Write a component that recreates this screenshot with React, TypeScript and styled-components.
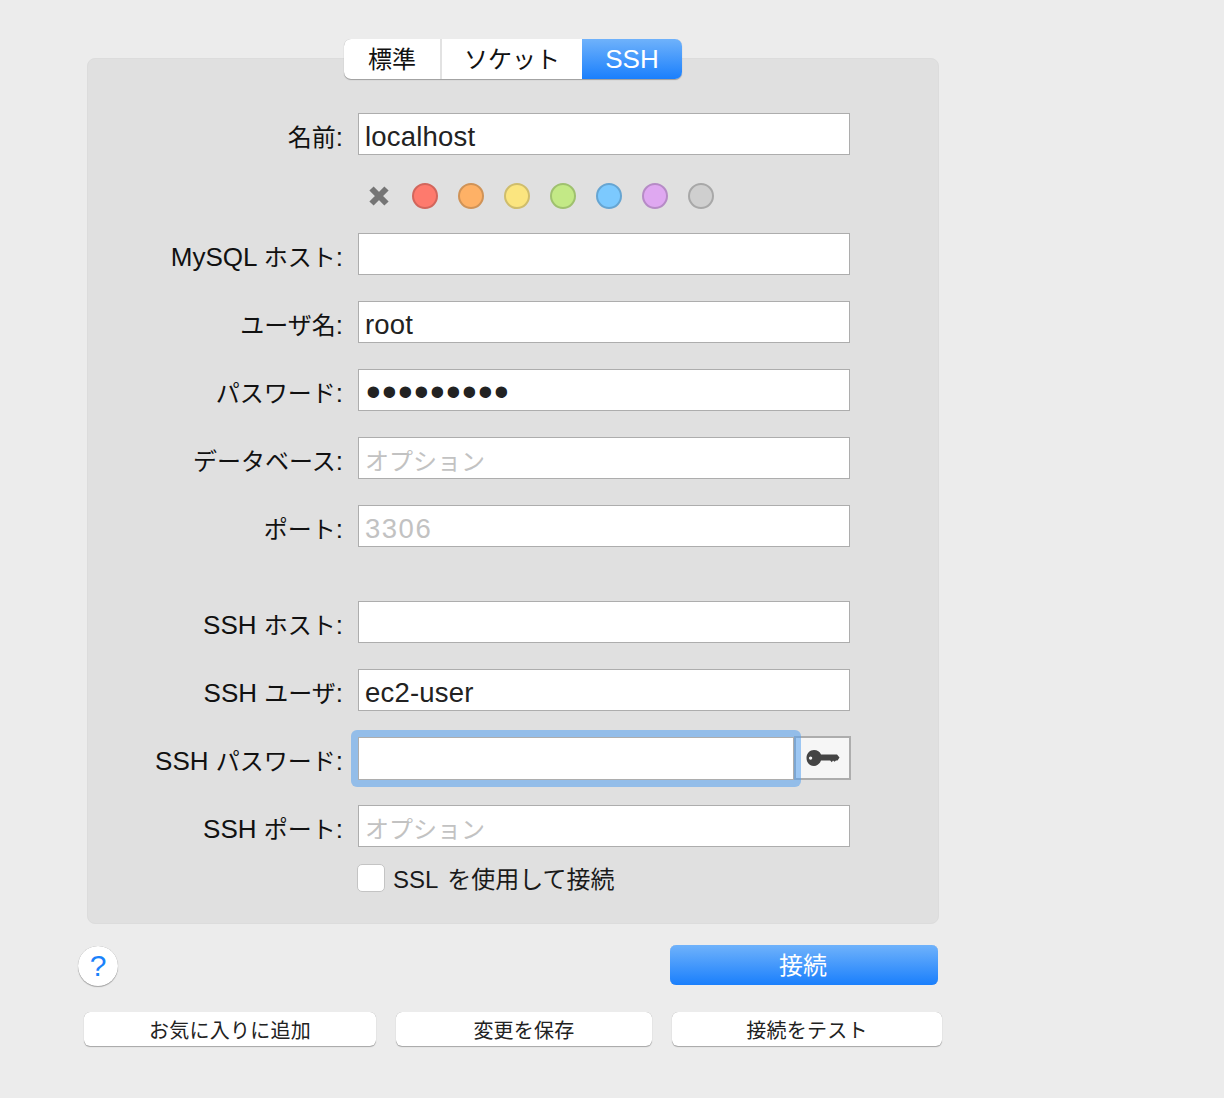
import * as React from 'react'
import styled, {createGlobalStyle} from 'styled-components'

const GlobalStyle = createGlobalStyle`
  html, body {
    margin: 0;
    padding: 0;
    background: #ececec;
  }
  body {
    font-family: "Liberation Sans", "Noto Sans CJK JP", sans-serif;
    font-size: 24px;
    color: #1a1a1a;
  }
`

const Page = styled.div`
  width: 864px;
  height: 1098px;
  box-sizing: border-box;
  margin-left: 78px;
  padding-top: 39px;
`

const Tabs = styled.div`
  position: relative;
  z-index: 1;
  display: flex;
  width: 338px;
  height: 40px;
  margin: 0 0 -21px 266px;
  background: #fff;
  border-radius: 7px;
  box-shadow: 0 1px 1px rgba(0, 0, 0, 0.3), 0 0 0.5px rgba(0, 0, 0, 0.3);
`

const Tab = styled.div<{$width: number; $active?: boolean; $divider?: boolean}>`
  display: flex;
  align-items: center;
  justify-content: center;
  box-sizing: border-box;
  width: ${p => p.$width}px;
  padding-bottom: ${p => (p.$active ? 0 : 4)}px;
  color: ${p => (p.$active ? '#fff' : '#111')};
  background: ${p => (p.$active ? 'linear-gradient(#6fb2fb, #1a7ffc)' : 'transparent')};
  border-radius: ${p => (p.$active ? '0 7px 7px 0' : '0')};
  border-right: ${p => (p.$divider ? '2px solid #e2e2e2' : 'none')};
`

const Panel = styled.div`
  box-sizing: border-box;
  width: 852px;
  height: 866px;
  margin-left: 9px;
  padding-top: 54px;
  background: #e0e0e0;
  border: 1px solid #dcdcdc;
  border-radius: 8px;
`

const Row = styled.div<{$after?: number}>`
  display: grid;
  grid-template-columns: 255px 492px;
  column-gap: 15px;
  height: 42px;
  margin-bottom: ${p => p.$after ?? 26}px;
`

const Label = styled.label`
  padding-top: 7px;
  text-align: right;
  color: #111;
  line-height: 34px;
  white-space: nowrap;
`

const Latin = styled.span`
  font-size: 26px;
`

const Input = styled.input<{$spread?: number; $placeholderSize?: number}>`
  box-sizing: border-box;
  width: 100%;
  height: 42px;
  padding: 6px 6px 0;
  font-family: inherit;
  font-size: 27.5px;
  letter-spacing: 0.2px;
  color: #222;
  background: #fff;
  border: 1.5px solid #adadad;
  border-radius: 0;
  outline: none;

  &::placeholder {
    color: #c2c2c2;
    opacity: 1;
    font-size: ${p => p.$placeholderSize ?? 24}px;
    letter-spacing: ${p => p.$spread ?? 0}px;
  }
`

const PasswordInput = styled(Input)`
  padding: 3px 4px 0 7px;
  font-size: 42px;
  letter-spacing: 1.3px;
`

const FocusGroup = styled.div`
  display: flex;
  width: 493px;
  height: 44px;
  margin-top: -1px;
`

const FocusRing = styled.div`
  position: relative;
  z-index: 1;
  flex: none;
  width: 436px;
  height: 43px;
  margin: -6px -7px 0 -7px;
  padding: 7px;
  background: rgba(84, 160, 240, 0.55);
  border-radius: 6px;
`

const FocusedInput = styled(Input)`
  height: 43px;
`

const KeyButton = styled.div`
  display: flex;
  align-items: center;
  justify-content: center;
  box-sizing: border-box;
  width: 57px;
  padding-left: 1px;
  background: #f6f6f6;
  border: 2px solid #adadad;
`

const ColorRow = styled.div`
  display: flex;
  align-items: center;
  gap: 20px;
  height: 26px;
  margin: 28px 0 24px 280px;
`

const ClearIcon = styled.svg`
  width: 22px;
  height: 22px;
  margin-right: 2px;
`

const Swatch = styled.div<{$fill: string; $edge: string}>`
  box-sizing: border-box;
  width: 26px;
  height: 26px;
  background: ${p => p.$fill};
  border: 2px solid ${p => p.$edge};
  border-radius: 50%;
`

const CheckRow = styled.label`
  display: flex;
  align-items: center;
  gap: 8px;
  height: 28px;
  margin: -9px 0 0 269px;
  color: #1a1a1a;
`

const CheckBox = styled.span`
  box-sizing: border-box;
  width: 28px;
  height: 28px;
  background: #fff;
  border: 1px solid #c4c4c4;
  border-radius: 5px;
`

const CheckText = styled.span`
  position: relative;
  top: -1px;
  word-spacing: 3px;
`

const ActionRow = styled.div`
  display: flex;
  align-items: flex-start;
  justify-content: space-between;
  height: 41px;
  margin: 21px 4px 0 0;
`

const HelpButton = styled.div`
  display: flex;
  align-items: center;
  justify-content: center;
  box-sizing: border-box;
  width: 40px;
  height: 40px;
  margin-top: 1px;
  font-size: 30px;
  color: #1a82fb;
  background: #fff;
  border-radius: 50%;
  box-shadow: 0 1px 1px rgba(0, 0, 0, 0.3), 0 0 0.5px rgba(0, 0, 0, 0.4);
`

const ConnectButton = styled.div`
  display: flex;
  align-items: center;
  justify-content: center;
  width: 268px;
  height: 40px;
  padding: 0 2px 4px 0;
  box-sizing: border-box;
  color: #fff;
  background: linear-gradient(#6fb2fb, #1a7ffc);
  border-radius: 6px;
  box-shadow: 0 0 0.5px rgba(0, 60, 160, 0.6);
`

const ButtonRow = styled.div`
  display: flex;
  gap: 20px;
  margin: 26px 0 0 6px;
`

const PlainButton = styled.div<{$width: number}>`
  display: flex;
  align-items: center;
  justify-content: center;
  box-sizing: border-box;
  width: ${p => p.$width}px;
  height: 34px;
  font-size: 20px;
  letter-spacing: 0.25px;
  color: #222;
  background: #fff;
  border-radius: 6px;
  box-shadow: 0 1px 1px rgba(0, 0, 0, 0.3), 0 0 0.5px rgba(0, 0, 0, 0.35);
`

const swatches = [
  {fill: '#fe7a6d', edge: '#d2665c'},
  {fill: '#feb166', edge: '#d09357'},
  {fill: '#fbe57f', edge: '#cfbd6c'},
  {fill: '#c3e986', edge: '#9fc16f'},
  {fill: '#7cc9fe', edge: '#66a5d2'},
  {fill: '#dfa8f1', edge: '#b68bc6'},
  {fill: '#cfcfcf', edge: '#a8a8a8'},
]

const KeyIcon = () => (
  <svg width="34" height="20" viewBox="0 0 34 20">
    <path
      fill="#444"
      fillRule="evenodd"
      d="M8 2c3.300 0 5.900 1.700 7 4.500h16l2.500 3-2 3h-1.500l-1.500 1.300-1.500-1.300-1.200 1.800-1.600-1.800-1.200 0-1.500 0H15c-1.100 3-3.700 5.500-7 5.500-4.200 0-7.500-3.400-7.500-8S3.800 2 8 2zM4.600 8.400a1.700 1.700 0 1 0 0 3.400 1.700 1.700 0 0 0 0-3.400z"
    />
  </svg>
)

export default function App() {
  return (
    <Page>
      <GlobalStyle />
      <Tabs>
        <Tab $width={98} $divider>標準</Tab>
        <Tab $width={140}>ソケット</Tab>
        <Tab $width={100} $active><Latin>SSH</Latin></Tab>
      </Tabs>
      <Panel>
        <Row $after={0}>
          <Label>名前<Latin>:</Latin></Label>
          <Input readOnly value="localhost" />
        </Row>
        <ColorRow>
          <ClearIcon viewBox="0 0 22 22">
            <path d="M3.500 3.500l15 15M18.500 3.500l-15 15" stroke="#757575" strokeWidth="6" />
          </ClearIcon>
          {swatches.map(s => (
            <Swatch key={s.fill} $fill={s.fill} $edge={s.edge} />
          ))}
        </ColorRow>
        <Row>
          <Label><Latin>MySQL </Latin>ホスト<Latin>:</Latin></Label>
          <Input readOnly />
        </Row>
        <Row>
          <Label>ユーザ名<Latin>:</Latin></Label>
          <Input readOnly value="root" />
        </Row>
        <Row>
          <Label>パスワード<Latin>:</Latin></Label>
          <PasswordInput readOnly type="password" value="123456789" />
        </Row>
        <Row>
          <Label>データベース<Latin>:</Latin></Label>
          <Input readOnly placeholder="オプション" />
        </Row>
        <Row $after={54}>
          <Label>ポート<Latin>:</Latin></Label>
          <Input readOnly placeholder="3306" $placeholderSize={27.5} $spread={1.5} />
        </Row>
        <Row>
          <Label><Latin>SSH </Latin>ホスト<Latin>:</Latin></Label>
          <Input readOnly />
        </Row>
        <Row>
          <Label><Latin>SSH </Latin>ユーザ<Latin>:</Latin></Label>
          <Input readOnly value="ec2-user" />
        </Row>
        <Row>
          <Label><Latin>SSH </Latin>パスワード<Latin>:</Latin></Label>
          <FocusGroup>
            <FocusRing><FocusedInput readOnly /></FocusRing>
            <KeyButton><KeyIcon /></KeyButton>
          </FocusGroup>
        </Row>
        <Row>
          <Label><Latin>SSH </Latin>ポート<Latin>:</Latin></Label>
          <Input readOnly placeholder="オプション" />
        </Row>
        <CheckRow>
          <CheckBox />
          <CheckText>SSL を使用して接続</CheckText>
        </CheckRow>
      </Panel>
      <ActionRow>
        <HelpButton>?</HelpButton>
        <ConnectButton>接続</ConnectButton>
      </ActionRow>
      <ButtonRow>
        <PlainButton $width={292}>お気に入りに追加</PlainButton>
        <PlainButton $width={256}>変更を保存</PlainButton>
        <PlainButton $width={270}>接続をテスト</PlainButton>
      </ButtonRow>
    </Page>
  )
}
